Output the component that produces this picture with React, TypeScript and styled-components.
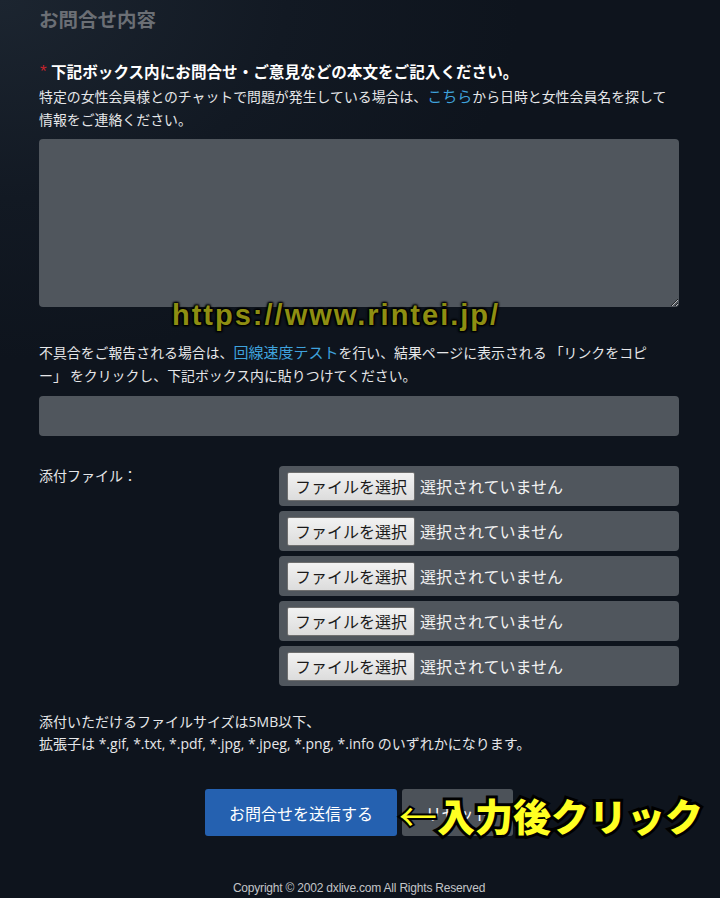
import React from "react";
import styled, { createGlobalStyle } from "styled-components";

const GlobalStyle = createGlobalStyle`
  body {
    margin: 0;
    background: #0e141d;
    font-family: "Noto Sans CJK JP", "Noto Sans", sans-serif;
  }
`;

const Page = styled.div`
  position: relative;
  box-sizing: border-box;
  width: 720px;
  min-height: 898px;
  padding: 5px 41px 0 39px;
  background: radial-gradient(ellipse 520px 360px at 0 0, #1c2530 0%, #121923 55%, #0e141d 100%);
  overflow: hidden;
`;

const Title = styled.h2`
  margin: 0;
  font-size: 19.5px;
  line-height: 28px;
  font-weight: 700;
  color: #6b6f75;
`;

const Required = styled.div`
  margin-top: 26px;
  font-size: 15.6px;
  line-height: 24px;
  font-weight: 700;
  color: #ffffff;
  white-space: nowrap;
`;

const Star = styled.span`
  display: inline-block;
  width: 11px;
  margin-left: 1px;
  font-family: "Liberation Sans", sans-serif;
  font-size: 17px;
  font-weight: 400;
  color: #c5232c;
  vertical-align: 1px;
`;

const Text = styled.p<{ $gap: number }>`
  margin: ${(p) => p.$gap}px 0 0;
  font-size: 13.9px;
  line-height: 23px;
  color: #e6e7e9;
  white-space: nowrap;
`;

const Link = styled.a`
  color: #3fa2dc;
  text-decoration: none;
  font-size: 15px;
`;

const MessageBox = styled.textarea`
  display: block;
  box-sizing: border-box;
  width: 100%;
  height: 168px;
  margin-top: 8px;
  border: none;
  border-radius: 4px;
  background: #50565d;
  color: #fff;
`;

const LinkInput = styled.input`
  display: block;
  box-sizing: border-box;
  width: 100%;
  height: 40px;
  margin-top: 9px;
  border: none;
  border-radius: 4px;
  background: #50565d;
`;

const AttachRow = styled.div`
  display: grid;
  grid-template-columns: 240px 400px;
  margin-top: 30px;
`;

const AttachLabel = styled.div`
  font-size: 14px;
  line-height: 18px;
  color: #e6e7e9;
`;

const FileList = styled.div`
  display: flex;
  flex-direction: column;
  gap: 5px;
`;

const FileRow = styled.div`
  display: flex;
  align-items: center;
  gap: 5px;
  height: 40px;
  padding: 0 8px;
  border-radius: 4px;
  background: #50565d;
`;

const FileButton = styled.button`
  height: 29px;
  padding: 0 7px;
  border: 1px solid #6f6f6f;
  border-radius: 2px;
  background: linear-gradient(#f2f2f2, #dcdcdc);
  font-family: "Noto Sans CJK JP", sans-serif;
  font-size: 16px;
  color: #1a1a1a;
`;

const FileStatus = styled.span`
  font-size: 16px;
  color: #f1f1f1;
`;

const Note = styled.p`
  margin: 25px 0 0;
  font-family: "Open Sans", "Noto Sans CJK JP", sans-serif;
  font-size: 14px;
  line-height: 22px;
  color: #e6e7e9;
  white-space: nowrap;
`;

const ButtonRow = styled.div`
  display: flex;
  justify-content: center;
  gap: 5px;
  margin-top: 34px;
`;

const ActionButton = styled.button<{ $primary?: boolean }>`
  width: ${(p) => (p.$primary ? 192 : 111)}px;
  height: 47px;
  border: none;
  border-radius: 3px;
  background: ${(p) => (p.$primary ? "#2561b0" : "#4c5259")};
  font-family: "Noto Sans CJK JP", sans-serif;
  font-size: 16px;
  color: #ffffff;
`;

const Copyright = styled.div`
  margin-top: 45px;
  font-family: "Liberation Sans", Arial, sans-serif;
  font-size: 12px;
  line-height: 14px;
  text-align: center;
  color: #c3c5c8;
  letter-spacing: -0.2px;
`;

const Watermark = styled.div`
  position: absolute;
  left: 172px;
  top: 298px;
  font-family: "Liberation Sans", Arial, sans-serif;
  font-size: 29px;
  line-height: 34px;
  font-weight: 700;
  color: #8e8e12;
  letter-spacing: 2px;
  text-shadow: 0 0 2px #000, 1px 1px 2px #000, -1px -1px 2px #000, 1px -1px 2px #000, -1px 1px 2px #000;
`;

const Annotation = styled.div`
  position: absolute;
  left: 399px;
  top: 792px;
  font-family: "Noto Sans CJK JP", sans-serif;
  font-size: 38px;
  line-height: 46px;
  font-weight: 900;
  color: #ffff22;
  white-space: nowrap;
  -webkit-text-stroke: 6px #000;
  paint-order: stroke fill;
`;

const Arrow = styled.span`
  font-weight: 400;
  -webkit-text-stroke: 4px #000;
`;

const files = [0, 1, 2, 3, 4];

export default function App(): JSX.Element {
  return (
    <Page>
      <GlobalStyle />
      <Title>お問合せ内容</Title>
      <Required>
        <Star>*</Star>下記ボックス内にお問合せ・ご意見などの本文をご記入ください。
      </Required>
      <Text $gap={0}>
        特定の女性会員様とのチャットで問題が発生している場合は、<Link href="#">こちら</Link>から日時と女性会員名を探して
        <br />
        情報をご連絡ください。
      </Text>
      <MessageBox />
      <Text $gap={33}>
        不具合をご報告される場合は、<Link href="#">回線速度テスト</Link>を行い、結果ページに表示される 「リンクをコピ
        <br />
        ー」 をクリックし、下記ボックス内に貼りつけてください。
      </Text>
      <LinkInput type="text" />
      <AttachRow>
        <AttachLabel>添付ファイル：</AttachLabel>
        <FileList>
          {files.map((i) => (
            <FileRow key={i}>
              <FileButton type="button">ファイルを選択</FileButton>
              <FileStatus>選択されていません</FileStatus>
            </FileRow>
          ))}
        </FileList>
      </AttachRow>
      <Note>
        添付いただけるファイルサイズは5MB以下、
        <br />
        拡張子は *.gif, *.txt, *.pdf, *.jpg, *.jpeg, *.png, *.info のいずれかになります。
      </Note>
      <ButtonRow>
        <ActionButton $primary type="button">お問合せを送信する</ActionButton>
        <ActionButton type="button">リセット</ActionButton>
      </ButtonRow>
      <Copyright>Copyright © 2002 dxlive.com All Rights Reserved</Copyright>
      <Watermark>https://www.rintei.jp/</Watermark>
      <Annotation>
        <Arrow>←</Arrow>入力後クリック
      </Annotation>
    </Page>
  );
}
